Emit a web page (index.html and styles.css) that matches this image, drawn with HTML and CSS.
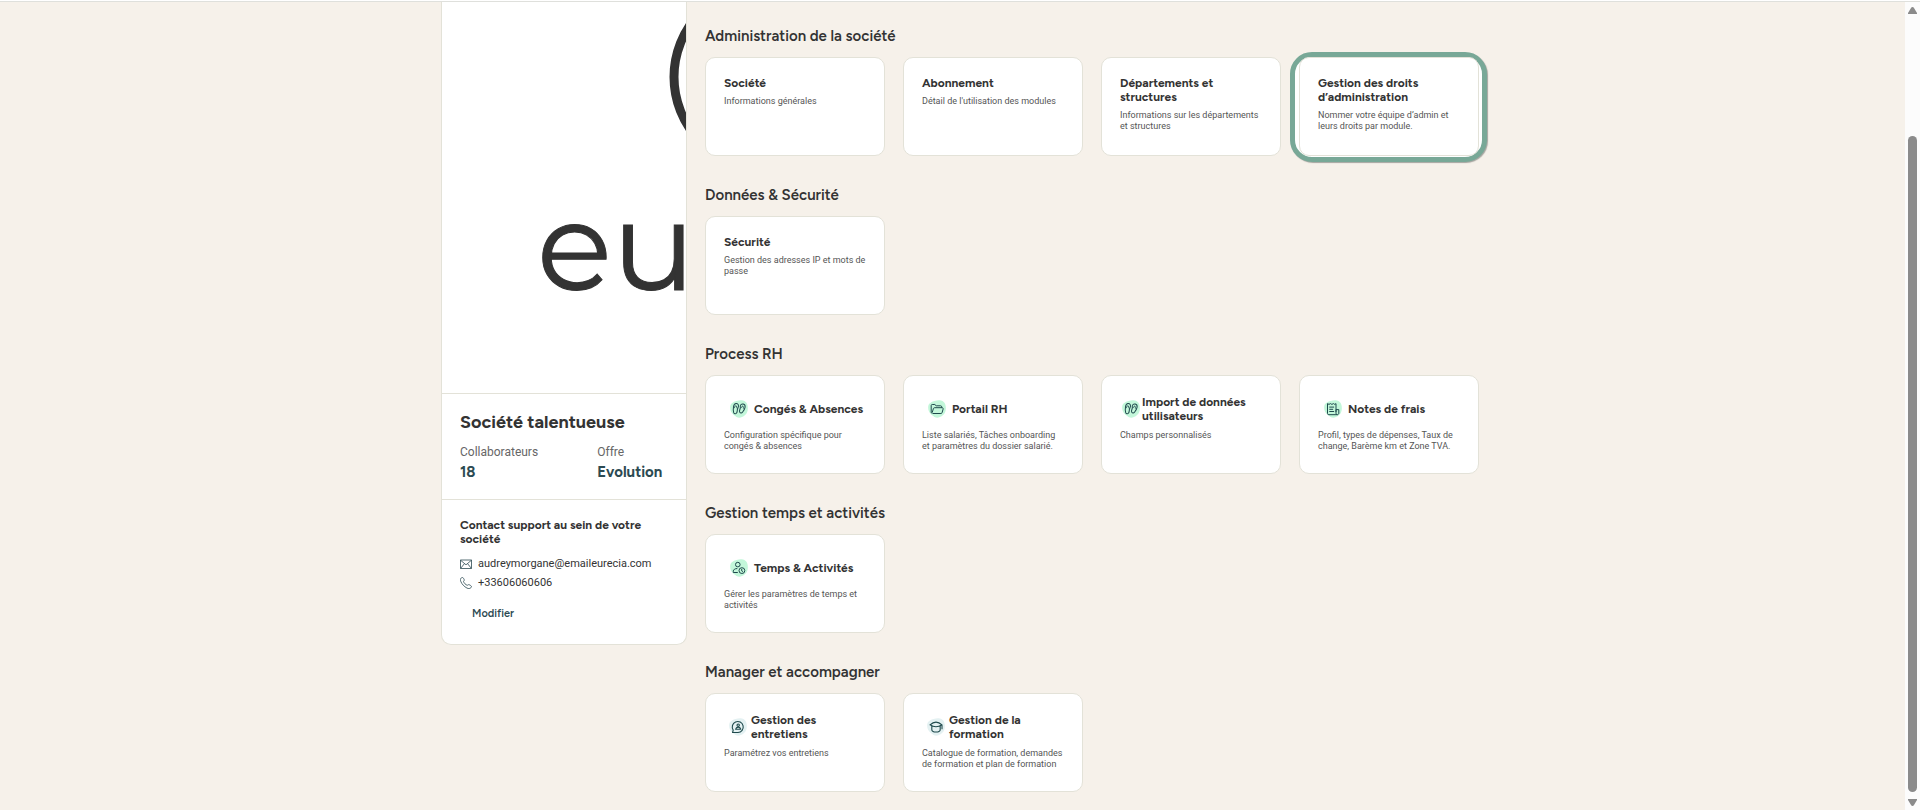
FILE: index.html
```html
<!DOCTYPE html>
<html lang="fr">
<head>
<meta charset="utf-8">
<meta name="viewport" content="width=device-width, initial-scale=1">
<title>Administration</title>
<link rel="stylesheet" href="styles.css">
</head>
<body>
<svg class="defs" aria-hidden="true">
  <symbol id="blob" viewBox="0 0 18 18"><path d="M6.5.9C9 .2 11 0 13 .5c2.200.6 3.700 2 4.300 4 .7 2.300.8 5-.1 7.400-.9 2.300-3 4.200-5.200 5.200-2 .9-4 .7-5.500-.2C4.500 15.700 2.200 14 1.100 11.800 0 9.600-.2 7 .6 4.700 1.600 2.700 4 1.500 6.500.9z"/></symbol>
  <symbol id="flipflops" viewBox="0 0 18 18"><g fill="none" stroke="currentColor" stroke-width="1" transform="rotate(10 9 9)"><path d="M5.200 4.200c1.600-.4 2.700.6 2.800 2.200.1 1.300-.5 2-.5 3.200 0 1.600.5 2.600-.3 4-.7 1.100-2.200 1-2.800-.1C3.700 12 3.200 10 3.200 7.800c0-1.800.7-3.300 2-3.600z"/><path d="M12.300 3.300c1.600 0 2.400 1.400 2.400 3.100 0 2.100-.8 3.700-1.700 5.200-.7 1.200-2.300 1.200-2.900.1-.7-1.300 0-2.300 0-3.800 0-1-.5-1.700-.3-2.700.2-1.200 1.200-1.900 2.500-1.900z"/><path stroke-width=".8" d="M4.200 9c0-1.500.5-2.400 1.300-2.800.8.600 1.200 1.600 1.400 2.500M10.800 7.600c.3-1.200.7-1.800 1.400-2.300.7.700 1 1.600 1.100 2.600"/></g></symbol>
  <symbol id="folder" viewBox="0 0 18 18"><g fill="none" stroke="currentColor" stroke-width="1" stroke-linejoin="round"><path d="M4.500 13.500h8.400c.7 0 1-.3 1.200-.9l1-3.500c.2-.8-.2-1.400-1-1.400H6.700c-.7 0-1.100.3-1.300.9l-1.200 3.900c-.2.600-.9.700-1-.1V5.500c0-.6.4-1 1-1h2.600l1.400 1.300h4.300c.8 0 1.200.4 1.200 1v.9"/></g></symbol>
  <symbol id="receipt" viewBox="0 0 18 18"><g fill="none" stroke="currentColor" stroke-width="1"><path d="M12 12V3.600l-1.200.8-1.400-.8-1.500.8-1.500-.8-1.400.8-1.500-.8v9.800c0 .8.500 1.300 1.300 1.300h8.400c1 0 1.600-.7 1.600-1.600v-3.500H12v3.300c0 1.100.5 1.700 1.300 1.800M5.300 7.100h4.800M5.300 9.300h3.800M5.300 11.500h4.800"/></g></symbol>
  <symbol id="person-clock" viewBox="0 0 18 18"><g fill="none" stroke="currentColor" stroke-width="1"><circle cx="7.800" cy="5.600" r="2.300"/><path d="M7.800 13.500H3.300v-1.200c0-1.700 1.500-2.700 4-2.800"/><circle cx="11.900" cy="11.600" r="2.900"/><path d="M11.700 9.900v2l1.200.7"/></g></symbol>
  <symbol id="talk" viewBox="0 0 18 18"><g fill="none" stroke="currentColor" stroke-width="1.100"><path d="M3.600 14.500l.6-2.400A5.500 5.500 0 1 1 9 14.500z"/><circle cx="9.200" cy="7.200" r="1.200"/><path d="M6.700 11.200c.2-1.400 1.100-2.100 2.500-2.100s2.300.7 2.500 2.100z"/></g></symbol>
  <symbol id="cap" viewBox="0 0 18 18"><g fill="none" stroke="currentColor" stroke-width="1.100" stroke-linejoin="round"><path d="M3 6.800C5 5 7 4.100 9 4.100s4 .9 6 2.700c-2 1.300-4 2-6 2S5 8.100 3 6.800zM4.800 8v3.400c0 1.600 1.900 2.600 4.200 2.600s4.200-1 4.200-2.600V8M15 6.800v4.500"/></g></symbol>
</svg>

<div class="topline"></div>
<div class="shell">
  <main class="page">
    <div class="layout">
      <aside class="company">
        <svg class="company-logo" viewBox="0 0 244 391" role="img" aria-label="Logo">
          <circle cx="324" cy="75" r="92" fill="none" stroke="#333" stroke-width="9"/>
          <text x="95" y="288">eu</text>
        </svg>
        <section class="company-block">
          <h1>Société talentueuse</h1>
          <dl class="facts">
            <div><dt>Collaborateurs</dt><dd>18</dd></div>
            <div><dt>Offre</dt><dd>Evolution</dd></div>
          </dl>
        </section>
        <section class="company-block contact">
          <h2>Contact support au sein de votre société</h2>
          <p class="contact-line">
            <svg viewBox="0 0 12 12" aria-hidden="true"><path d="M.5 2h11v8.500H.5zM.5 2.200L6 6.800l5.500-4.600M.7 10.300l3.600-4.500M11.300 10.300L7.700 5.800"/></svg>
            <span>audreymorgane@emaileurecia.com</span>
          </p>
          <p class="contact-line">
            <svg viewBox="0 0 12 12" aria-hidden="true"><path d="M1.200 1C2.200 0 3 .4 3.600 1.500l.6 1.100c.4.800-.5 1.300-.7 1.900.5 1.600 2 3.100 3.700 3.800.7-.1 1.200-1 2-.6l1.400.8c1 .6 1.200 1.400.3 2.200-1 1-2.300 1.100-3.900.4C4.200 9.600 1.800 7.200.7 4.200.2 2.900.3 1.800 1.200 1z"/></svg>
            <span>+33606060606</span>
          </p>
          <button class="edit" type="button">Modifier</button>
        </section>
      </aside>

      <div class="sections">
        <section>
          <h2>Administration de la société</h2>
          <div class="cards">
            <a class="card" href="#"><h3>Société</h3><p>Informations générales</p></a>
            <a class="card" href="#"><h3>Abonnement</h3><p>Détail de l'utilisation des modules</p></a>
            <a class="card" href="#"><h3>Départements et structures</h3><p>Informations sur les départements et structures</p></a>
            <a class="card card-highlight" href="#"><h3>Gestion des droits d’administration</h3><p>Nommer votre équipe d’admin et leurs droits par module.</p></a>
          </div>
        </section>
        <section>
          <h2>Données &amp; Sécurité</h2>
          <div class="cards">
            <a class="card" href="#"><h3>Sécurité</h3><p>Gestion des adresses IP et mots de passe</p></a>
          </div>
        </section>
        <section>
          <h2>Process RH</h2>
          <div class="cards">
            <a class="card" href="#"><div class="card-head"><span class="icon"><svg><use href="#blob" class="blob"/><use href="#flipflops"/></svg></span><h3>Congés &amp; Absences</h3></div><p>Configuration spécifique pour congés &amp; absences</p></a>
            <a class="card" href="#"><div class="card-head"><span class="icon"><svg><use href="#blob" class="blob"/><use href="#folder"/></svg></span><h3>Portail RH</h3></div><p>Liste salariés, Tâches onboarding et paramètres du dossier salarié.</p></a>
            <a class="card" href="#"><div class="card-head"><span class="icon icon-tight"><svg><use href="#blob" class="blob"/><use href="#flipflops"/></svg></span><h3>Import de données utilisateurs</h3></div><p>Champs personnalisés</p></a>
            <a class="card" href="#"><div class="card-head"><span class="icon"><svg><use href="#blob" class="blob"/><use href="#receipt"/></svg></span><h3>Notes de frais</h3></div><p>Profil, types de dépenses, Taux de change, Barème km et Zone TVA.</p></a>
          </div>
        </section>
        <section>
          <h2>Gestion temps et activités</h2>
          <div class="cards">
            <a class="card" href="#"><div class="card-head"><span class="icon"><svg><use href="#blob" class="blob"/><use href="#person-clock"/></svg></span><h3>Temps &amp; Activités</h3></div><p>Gérer les paramètres de temps et activités</p></a>
          </div>
        </section>
        <section>
          <h2>Manager et accompagner</h2>
          <div class="cards">
            <a class="card" href="#"><div class="card-head"><span class="icon icon-pale"><svg><use href="#blob" class="blob"/><use href="#talk"/></svg></span><h3>Gestion des entretiens</h3></div><p>Paramétrez vos entretiens</p></a>
            <a class="card" href="#"><div class="card-head"><span class="icon icon-pale"><svg><use href="#blob" class="blob"/><use href="#cap"/></svg></span><h3>Gestion de la formation</h3></div><p>Catalogue de formation, demandes de formation et plan de formation</p></a>
          </div>
        </section>
      </div>
    </div>
  </main>
  <div class="scrollbar" aria-hidden="true">
    <svg viewBox="0 0 9 8"><path d="M4.500 0Q5.500 0 6 1L9 6v1H0V6l3-5Q3.500 0 4.500 0z"/></svg>
    <div class="track"><div class="thumb"></div></div>
    <svg viewBox="0 0 9 8"><path d="M4.500 7Q5.500 7 6 6L9 1V0H0v1l3 5Q3.500 7 4.500 7z"/></svg>
  </div>
</div>
</body>
</html>
```
FILE: styles.css
```css
:root {
  --sand: #f6f1ea;
  --line: #e3e2d8;
  --ink: #333;
  --petrol: #2c4a52;
  --heading: Figtree, Lato, sans-serif;
  --body: Roboto, sans-serif;
}

* { box-sizing: border-box; }

body {
  display: flex;
  flex-direction: column;
  min-height: 100vh;
  margin: 0;
  background: var(--sand);
  color: var(--ink);
  font-family: var(--body);
}

h1, h2, h3, p, dl, dd { margin: 0; }
h1, h2, h3, dd { font-family: var(--heading); }

.defs { display: none; }

.topline {
  height: 2px;
  background: #fff;
  border-bottom: 1px solid #dfe0dc;
}

.shell { display: flex; flex: 1; }
.page { flex: 1; min-width: 0; }

.layout {
  display: grid;
  grid-template-columns: 246px 1fr;
  gap: 18px;
  align-items: start;
  max-width: 1059px;
  margin: 0 auto;
  padding: 0 3px 0 18px;
}

/* company panel */
.company {
  overflow: hidden;
  background: #fff;
  border: 1px solid var(--line);
  border-top: 0;
  border-radius: 0 0 10px 10px;
}
.company-logo { display: block; width: 100%; }
.company-logo text {
  fill: #333;
  stroke: #333;
  stroke-width: 1;
  font: 124px Montserrat, var(--heading);
}
.company-block {
  padding: 18px;
  border-top: 1px solid var(--line);
}
.company h1 {
  font-size: 18px;
  font-weight: 700;
  line-height: 20px;
}
.facts {
  display: grid;
  grid-template-columns: 66% 1fr;
  margin-top: 12px;
}
.facts dt {
  color: #666;
  font-size: 12px;
  line-height: 16px;
}
.facts dd {
  margin-top: 4px;
  padding-bottom: 1px;
  color: var(--petrol);
  font-size: 15px;
  font-weight: 700;
  line-height: 16px;
}
.contact h2 {
  margin-bottom: 8px;
  font-size: 12px;
  font-weight: 700;
  line-height: 14px;
}
.contact-line {
  display: flex;
  align-items: center;
  gap: 6px;
  font-size: 11px;
  line-height: 19px;
}
.contact-line svg {
  width: 12px;
  height: 12px;
  fill: none;
  stroke: var(--petrol);
  stroke-width: .8;
}
.edit {
  margin: 11px 0 1px;
  padding: 4px 12px;
  border: 0;
  background: none;
  color: var(--petrol);
  font: 600 11px/14px var(--heading);
}

/* settings sections */
.sections {
  display: grid;
  gap: 30px;
  padding: 25px 0 12px;
}
.sections h2 {
  margin-bottom: 12px;
  font-size: 15px;
  font-weight: 600;
  line-height: 18px;
}
.cards {
  display: grid;
  grid-template-columns: repeat(4, 1fr);
  gap: 18px;
  isolation: isolate;
}
.card {
  position: relative;
  min-height: 99px;
  padding: 18px;
  background: #fff;
  border: 1px solid var(--line);
  border-radius: 10px;
  color: inherit;
  text-decoration: none;
}
.card h3 {
  font-size: 12px;
  font-weight: 700;
  line-height: 14px;
}
.card p {
  margin-top: 6px;
  color: #555;
  font-size: 9px;
  line-height: 11px;
}
.card-highlight::before {
  content: "";
  position: absolute;
  inset: -6px -9px -7px -10px;
  z-index: -1;
  background: #fff;
  border: 5px solid #78a897;
  border-radius: 22px;
  box-shadow: 1px 1px 1px #a5a5a0;
}
.card-head {
  display: flex;
  align-items: center;
  height: 30px;
}
.icon {
  display: flex;
  flex: none;
  justify-content: center;
  width: 30px;
  color: #1f4a4d;
}
.icon svg { flex: none; width: 18px; height: 18px; }
.icon .blob { fill: #c3f7da; }
.icon-tight { width: 22px; }
.icon-pale { width: 27px; }
.icon-pale .blob { fill: #e4f1f2; }

/* scrollbar */
.scrollbar {
  display: flex;
  flex-direction: column;
  align-items: center;
  width: 15px;
  padding: 5px 0 3px;
  background: #fcfcfc;
}
.scrollbar svg { width: 9px; height: 8px; fill: #8b8b8b; }
.track {
  display: flex;
  flex: 1;
  flex-direction: column;
  justify-content: flex-end;
  padding-bottom: 7px;
}
.thumb {
  width: 9px;
  height: 84.4%;
  background: #8b8b8b;
  border-radius: 5px;
}
```
